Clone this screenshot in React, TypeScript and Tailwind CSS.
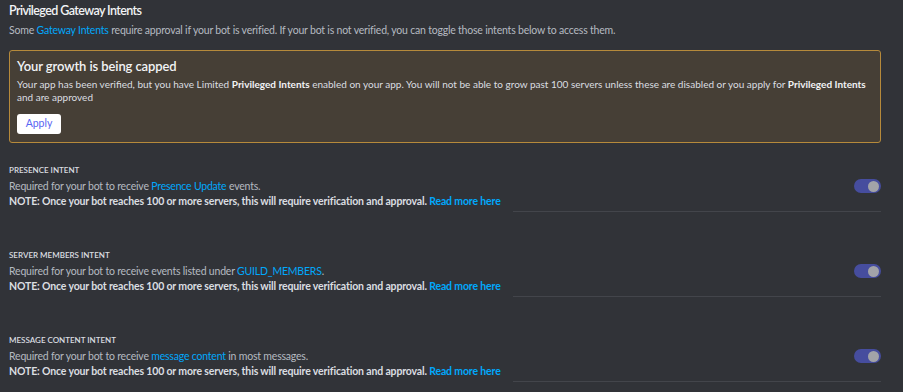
const font = { fontFamily: 'Lato, "Noto Sans", sans-serif' };

interface Intent {
  title: string;
  before: string;
  link: string;
  after: string;
}

const intents: Intent[] = [
  { title: "PRESENCE INTENT", before: "Required for your bot to receive ", link: "Presence Update", after: " events." },
  { title: "SERVER MEMBERS INTENT", before: "Required for your bot to receive events listed under ", link: "GUILD_MEMBERS", after: "." },
  { title: "MESSAGE CONTENT INTENT", before: "Required for your bot to receive ", link: "message content", after: " in most messages." },
];

function Toggle() {
  return (
    <div className="flex h-[14px] w-[27px] items-center justify-end rounded-full bg-[#464d9e] pr-[2px]">
      <div className="h-[11px] w-[11px] rounded-full bg-[#a2a3a8]" />
    </div>
  );
}

export default function App() {
  return (
    <div className="h-[392px] w-[903px] overflow-hidden bg-[#313338] pl-[9px] pr-[22px] pt-[1px] text-[#b5bac1]" style={font}>
      <h2 className="text-[12.5px] font-semibold leading-[20px] tracking-[-0.6px] text-[#f2f3f5]">Privileged Gateway Intents</h2>
      <p className="mt-[2px] text-[10.5px] leading-[14px] tracking-[-0.2px]">
        Some <span className="text-[#00a8fc]">Gateway Intents</span> require approval if your bot is verified. If your bot is not verified, you can toggle those intents below to access them.
      </p>

      <div className="mt-[13px] h-[93px] rounded-[3px] border border-[#b68a3b] bg-[#463f36] px-[7px] pt-[6px]">
        <div className="text-[13px] font-semibold leading-[18px] tracking-[-0.1px] text-[#f2f3f5]">Your growth is being capped</div>
        <p className="mt-[3px] text-[10px] leading-[13px] text-[#dbdee1]">
          Your app has been verified, but you have Limited <b className="text-[#f2f3f5]">Privileged Intents</b> enabled on your app. You will not be able to grow past 100 servers unless these are disabled or you apply for <b className="text-[#f2f3f5]">Privileged Intents</b> and are approved
        </p>
        <button className="mt-[10px] flex h-[20px] w-[44px] items-center justify-center rounded-[3px] bg-white text-[10.5px] text-[#5865f2]">
          Apply
        </button>
      </div>

      <div className="mt-[21px] flex flex-col gap-[40px]">
        {intents.map((it) => (
          <div key={it.title}>
            <div className="text-[8px] font-semibold leading-[12px] text-[#dbdee1]">{it.title}</div>
            <div className="mt-[2px] flex items-center justify-between">
              <div className="text-[10.5px] leading-[16px] tracking-[-0.2px]">
                {it.before}
                <span className="text-[#00a8fc]">{it.link}</span>
                {it.after}
              </div>
              <Toggle />
            </div>
            <div className="flex items-end">
              <div className="whitespace-nowrap text-[10.5px] font-bold leading-[15px] tracking-[-0.15px] text-[#dbdee1]">
                NOTE: Once your bot reaches 100 or more servers, this will require verification and approval.{" "}
                <span className="text-[#00a8fc]">Read more here</span>
              </div>
              <div className="ml-[12px] mb-[-3px] flex-1 border-b border-[#43454b]" />
            </div>
          </div>
        ))}
      </div>
    </div>
  );
}
